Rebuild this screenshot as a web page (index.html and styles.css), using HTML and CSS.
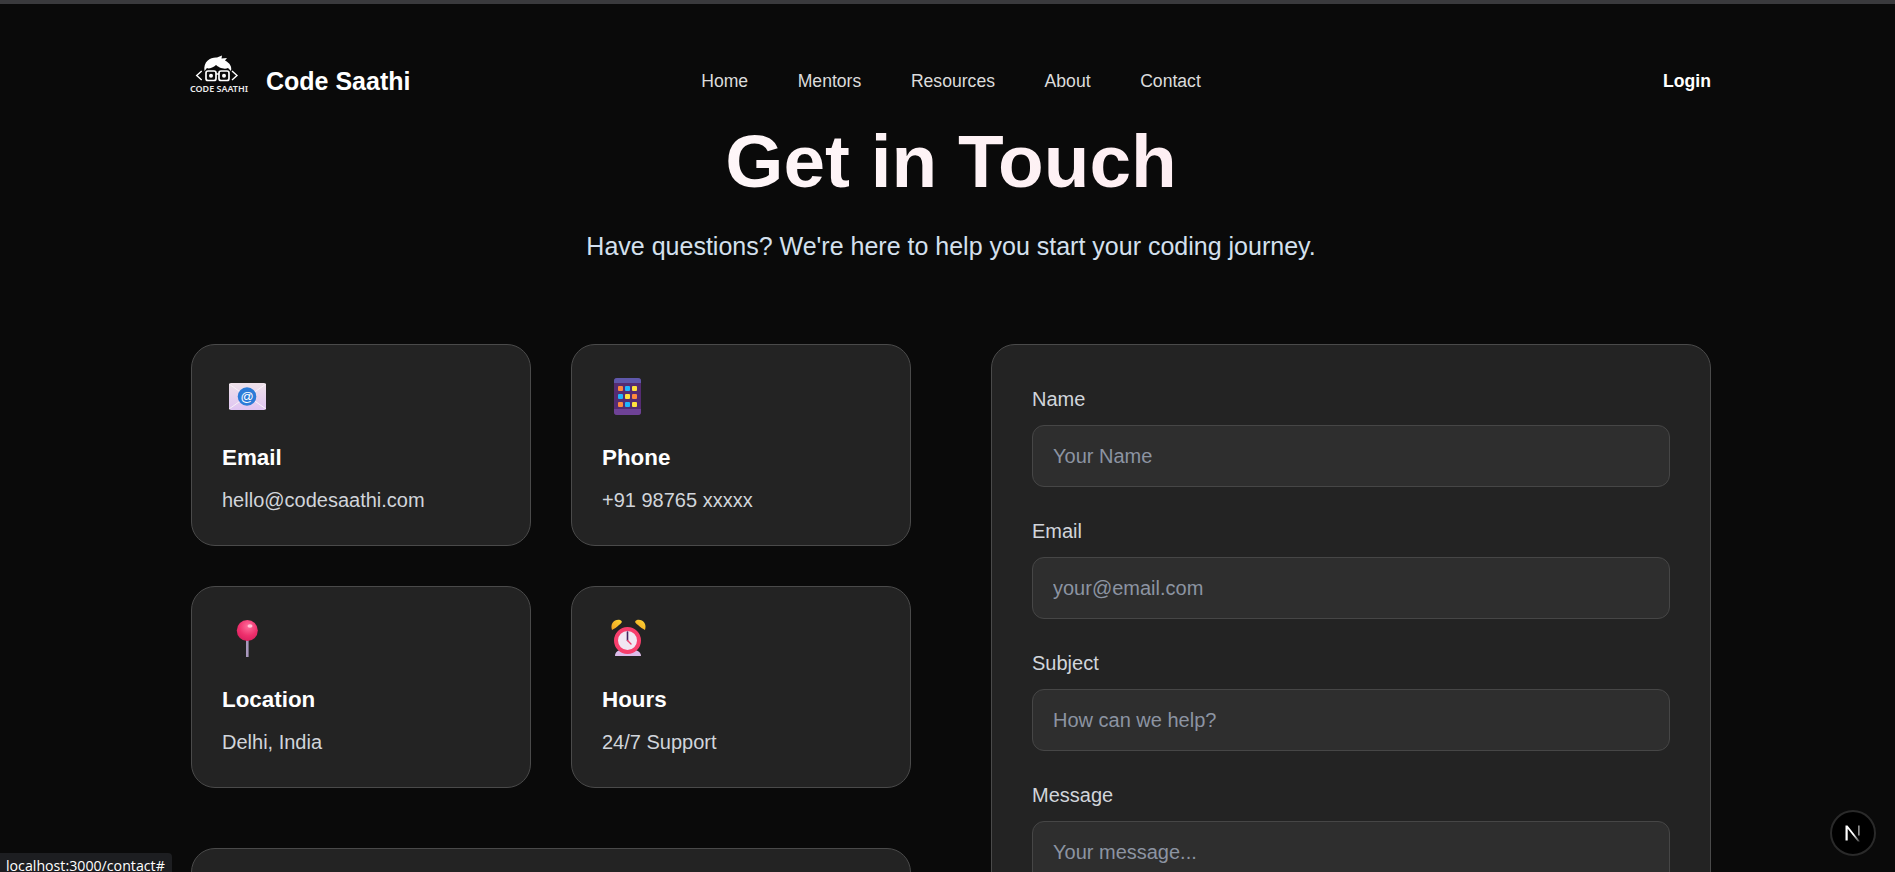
FILE: index.html
```html
<!DOCTYPE html>
<html lang="en">
<head>
    <meta charset="UTF-8">
    <meta name="viewport" content="width=device-width, initial-scale=1.0">
    <title>Contact - Code Saathi</title>
    <link rel="stylesheet" href="styles.css">
</head>
<body>
    <div class="browser-edge"></div>

    <div class="page">
        <nav class="navbar">
            <a class="brand" href="#">
                <svg class="brand-logo" width="60" height="60" viewBox="0 0 60 60">
                    <path d="M13.500 19C12 9 20 5 26 5.500L31 3.500L30.500 6.500L36 6L34 8.500C39 11 41 15 40 19L37 16C33 18 27 15 25 13C22 16 17 17 16 16Z" fill="#fff"/>
                    <rect x="15" y="19" width="10" height="9.500" rx="2" fill="#0a0a0a" stroke="#fff" stroke-width="1.700"/>
                    <rect x="28" y="19" width="10" height="9.500" rx="2" fill="#0a0a0a" stroke="#fff" stroke-width="1.700"/>
                    <path d="M25 22H28" stroke="#fff" stroke-width="1.400"/>
                    <circle cx="20" cy="23.700" r="2" fill="#fff"/>
                    <circle cx="33" cy="23.700" r="2" fill="#fff"/>
                    <path d="M10.700 19L5.700 23.500L10.700 28M41 19L46 23.500L41 28" fill="none" stroke="#fff" stroke-width="1.400"/>
                    <text class="logo-text" x="-1" y="40" textLength="58" lengthAdjust="spacingAndGlyphs">CODE SAATHI</text>
                </svg>
                <span class="brand-name">Code Saathi</span>
            </a>
            <div class="nav-links">
                <a href="#">Home</a>
                <a href="#">Mentors</a>
                <a href="#">Resources</a>
                <a href="#">About</a>
                <a href="#">Contact</a>
            </div>
            <a class="login" href="#">Login</a>
        </nav>

        <header class="hero">
            <h1>Get in Touch</h1>
            <p>Have questions? We're here to help you start your coding journey.</p>
        </header>

        <main class="contact-grid">
            <section class="info-col">
                <div class="info-cards">
                    <div class="info-card">
                        <div class="card-icon">
                            <svg width="52" height="52" viewBox="0 0 52 52">
                                <defs>
                                    <linearGradient id="envelope" x1="0" y1="0" x2="0" y2="1">
                                        <stop offset="0" stop-color="#efe2ea"/>
                                        <stop offset="1" stop-color="#dfc4f2"/>
                                    </linearGradient>
                                </defs>
                                <rect x="7" y="13" width="37" height="27" rx="2" fill="url(#envelope)"/>
                                <path d="M7 14L25.500 27L44 14M7 39L25.500 26L44 39" fill="none" stroke="#f8f2f7" stroke-width="1"/>
                                <circle cx="25" cy="26.500" r="9.300" fill="#2b7bd8"/>
                                <text class="at-sign" x="25" y="31">@</text>
                            </svg>
                        </div>
                        <h3>Email</h3>
                        <p>hello@codesaathi.com</p>
                    </div>
                    <div class="info-card">
                        <div class="card-icon">
                            <svg width="52" height="52" viewBox="0 0 52 52">
                                <rect x="12" y="8" width="27" height="37" rx="3" fill="#552c72"/>
                                <path d="M12 13V11A3 3 0 0 1 15 8H36A3 3 0 0 1 39 11V13Z" fill="#5f58ab"/>
                                <path d="M12 39V42A3 3 0 0 0 15 45H36A3 3 0 0 0 39 42V39Z" fill="#6e4296"/>
                                <rect x="16" y="16" width="5" height="5" rx="1" fill="#ff8a3d"/>
                                <rect x="23" y="16" width="5" height="5" rx="1" fill="#1fb6ff"/>
                                <rect x="30" y="16" width="5" height="5" rx="1" fill="#ffe23d"/>
                                <rect x="16" y="24" width="5" height="5" rx="1" fill="#1fb6ff"/>
                                <rect x="23" y="24" width="5" height="5" rx="1" fill="#ffe23d"/>
                                <rect x="30" y="24" width="5" height="5" rx="1" fill="#ff8a3d"/>
                                <rect x="16" y="32" width="5" height="5" rx="1" fill="#ff8a3d"/>
                                <rect x="23" y="32" width="5" height="5" rx="1" fill="#1fb6ff"/>
                                <rect x="30" y="32" width="5" height="5" rx="1" fill="#ffe23d"/>
                            </svg>
                        </div>
                        <h3>Phone</h3>
                        <p>+91 98765 xxxxx</p>
                    </div>
                    <div class="info-card">
                        <div class="card-icon">
                            <svg width="52" height="52" viewBox="0 0 52 52">
                                <defs>
                                    <radialGradient id="pin" cx="0.55" cy="0.3" r="0.75">
                                        <stop offset="0" stop-color="#ff6f9c"/>
                                        <stop offset="0.6" stop-color="#ee2f6c"/>
                                        <stop offset="1" stop-color="#d81f5e"/>
                                    </radialGradient>
                                </defs>
                                <rect x="24" y="28" width="2.600" height="17" fill="#a998bd"/>
                                <circle cx="25.300" cy="18.500" r="10.500" fill="url(#pin)"/>
                                <ellipse cx="28" cy="14" rx="2.500" ry="1.800" fill="#ffc4d8"/>
                            </svg>
                        </div>
                        <h3>Location</h3>
                        <p>Delhi, India</p>
                    </div>
                    <div class="info-card">
                        <div class="card-icon">
                            <svg width="52" height="52" viewBox="0 0 52 52">
                                <defs>
                                    <linearGradient id="bell" x1="0" y1="1" x2="1" y2="0">
                                        <stop offset="0" stop-color="#f0a020"/>
                                        <stop offset="1" stop-color="#fdd835"/>
                                    </linearGradient>
                                </defs>
                                <path d="M39 44C39 40 35 37 25.500 37C16 37 13 40 13 44Z" fill="#dcbcea"/>
                                <path d="M10 18C8 12 12 7 18 8C21 9 20 11 17 13C15 15 12 17 10 18Z" fill="url(#bell)"/>
                                <path d="M43 18C45 12 41 7 35 8C32 9 33 11 36 13C38 15 41 17 43 18Z" fill="url(#bell)"/>
                                <circle cx="25.500" cy="28.500" r="11.500" fill="#f1e7f2" stroke="#f73e6c" stroke-width="4"/>
                                <path d="M25.500 20V28.500" stroke="#43245f" stroke-width="1.600" stroke-linecap="round"/>
                                <path d="M25.500 28.500L29 32" stroke="#ef3d6b" stroke-width="1.400" stroke-linecap="round"/>
                            </svg>
                        </div>
                        <h3>Hours</h3>
                        <p>24/7 Support</p>
                    </div>
                </div>
                <div class="extra-card"></div>
            </section>

            <form class="contact-form">
                <div class="form-group">
                    <label for="name">Name</label>
                    <input id="name" type="text" placeholder="Your Name">
                </div>
                <div class="form-group">
                    <label for="email">Email</label>
                    <input id="email" type="email" placeholder="your@email.com">
                </div>
                <div class="form-group">
                    <label for="subject">Subject</label>
                    <input id="subject" type="text" placeholder="How can we help?">
                </div>
                <div class="form-group">
                    <label for="message">Message</label>
                    <textarea id="message" rows="6" placeholder="Your message..."></textarea>
                </div>
            </form>
        </main>
    </div>

    <div class="status-bar">localhost:3000/contact#</div>
    <div class="dev-badge">
        <svg width="22" height="22" viewBox="0 0 22 22">
            <defs>
                <linearGradient id="n-fade" x1="0" y1="0" x2="1" y2="1">
                    <stop offset="0.55" stop-color="#fff"/>
                    <stop offset="1" stop-color="#fff" stop-opacity="0.2"/>
                </linearGradient>
            </defs>
            <path d="M3.500 18.500V3.500H5.500L18 19.500H15.800L5.700 6.800V18.500Z" fill="url(#n-fade)"/>
            <rect x="16" y="3.500" width="1.700" height="10" fill="#fff" opacity="0.55"/>
        </svg>
    </div>
</body>
</html>
```

FILE: styles.css
```css
* {
    box-sizing: border-box;
}

html, body {
    height: 100%;
    margin: 0;
    overflow: hidden;
}

body {
    background-color: #0a0a0a;
    color: #fff;
    font-family: "Liberation Sans", Arial, sans-serif;
}

a {
    color: inherit;
    text-decoration: none;
}

.browser-edge {
    height: 4px;
    background-color: #3a3a3d;
}

.page {
    width: 1520px;
    margin-left: 191px;
}

.navbar {
    display: grid;
    grid-template-columns: 1fr auto 1fr;
    align-items: center;
    height: 60px;
    margin-top: 47px;
}

.brand {
    display: flex;
    align-items: center;
    gap: 15px;
}

.brand-logo {
    overflow: visible;
    transform: translateY(1px);
}

.logo-text {
    fill: #ececec;
    font-family: "Noto Sans", sans-serif;
    font-size: 8.5px;
    font-weight: 600;
}

.brand-name {
    font-size: 25px;
    font-weight: bold;
}

.nav-links {
    display: flex;
    gap: 49.6px;
    font-size: 17.6px;
    color: #dcdcdc;
}

.login {
    justify-self: end;
    font-size: 17.6px;
    font-weight: bold;
}

.hero {
    margin-top: 7px;
    text-align: center;
}

.hero h1 {
    margin: 0 0 24px;
    font-size: 74.8px;
    line-height: 86px;
    background: linear-gradient(90deg, #ffffff, #fde6ec);
    -webkit-background-clip: text;
    background-clip: text;
    color: transparent;
}

.hero p {
    margin: 0;
    font-size: 25px;
    line-height: 36px;
    color: #d4e0ee;
}

.contact-grid {
    display: grid;
    grid-template-columns: 720px 720px;
    gap: 80px;
    margin-top: 80px;
}

.info-cards {
    display: grid;
    grid-template-columns: 340px 340px;
    gap: 40px;
}

.info-card {
    height: 202px;
    padding: 30px;
    background-color: #232323;
    border: 1px solid #4a4a4a;
    border-radius: 24px;
}

.card-icon {
    display: flex;
    align-items: center;
    height: 42px;
    margin-bottom: 27px;
}

.at-sign {
    fill: #fff;
    font-family: "Liberation Sans", sans-serif;
    font-size: 13px;
    text-anchor: middle;
}

.info-card h3 {
    margin: 0 0 14px;
    font-size: 22.4px;
    line-height: 27px;
}

.info-card p {
    margin: 0;
    font-size: 20px;
    line-height: 30px;
    color: #d1d5db;
}

.extra-card {
    height: 300px;
    margin-top: 60px;
    background-color: #232323;
    border: 1px solid #4a4a4a;
    border-radius: 24px;
}

.contact-form {
    padding: 40px;
    background-color: #232323;
    border: 1px solid #4a4a4a;
    border-radius: 24px;
}

.form-group {
    margin-bottom: 30px;
}

.form-group label {
    display: block;
    margin-bottom: 11px;
    font-size: 20px;
    line-height: 29px;
    color: #d1d5db;
}

.form-group input, .form-group textarea {
    display: block;
    width: 100%;
    padding: 0 20px;
    background-color: #2e2e2e;
    border: 1px solid #464646;
    border-radius: 12px;
    color: #fff;
    font-family: inherit;
    font-size: 20px;
}

.form-group input {
    height: 62px;
}

.form-group textarea {
    padding-top: 18px;
    padding-bottom: 18px;
    line-height: 24px;
    resize: none;
}

.form-group input::placeholder, .form-group textarea::placeholder {
    color: #8c94a2;
    opacity: 1;
}

.status-bar {
    position: fixed;
    left: 0;
    bottom: 0;
    width: 172px;
    height: 19px;
    padding-left: 6px;
    background-color: #1d1e21;
    border-top-right-radius: 4px;
    color: #fff;
    font-family: "Open Sans", sans-serif;
    font-size: 14.2px;
    line-height: 25px;
    white-space: nowrap;
    overflow: hidden;
}

.dev-badge {
    position: fixed;
    left: 1830px;
    top: 810px;
    display: flex;
    align-items: center;
    justify-content: center;
    width: 46px;
    height: 46px;
    background-color: #000;
    border: 2px solid #2a2a2a;
    border-radius: 50%;
}
```
